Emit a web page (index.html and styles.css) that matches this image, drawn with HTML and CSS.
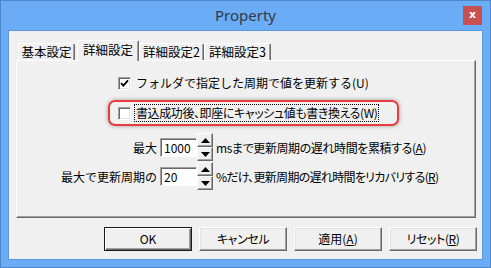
FILE: index.html
```html
<html>
<head>
    <meta charset="utf-8">
    <title>Property</title>
    <link rel="stylesheet" href="styles.css">
</head>
<body>
<div class="window">
    <div class="titlebar">
        <span class="title">Property</span>
        <span class="close">x</span>
    </div>
    <div class="client">
        <div class="tabs">
            <div class="tab tab-1">基本設定</div>
            <div class="tab tab-2 active">詳細設定</div>
            <div class="tab tab-3">詳細設定2</div>
            <div class="tab tab-4">詳細設定3</div>
        </div>
        <div class="panel">
            <div class="check first">
                <span class="box">
                    <svg width="11" height="11" viewBox="0 0 11 11"><path d="M2 5 L4.3 7.6 L9 2.4" fill="none" stroke="#000" stroke-width="1.8"/></svg>
                </span>
                <span>フォルダで指定した周期で値を更新する(U)</span>
            </div>
            <div class="highlight">
                <div class="check">
                    <span class="box"></span>
                    <span class="focus tight">書込成功後、即座にキャッシュ値も書き換える(W)</span>
                </div>
            </div>
            <div class="fields">
                <span class="label">最大</span>
                <div class="spin-field">
                    <span class="input">1000</span>
                    <span class="spinner">
                        <span class="spin-btn"><svg width="9" height="5" viewBox="0 0 9 5"><path d="M4.5 0 L9 5 L0 5 Z"/></svg></span>
                        <span class="spin-btn"><svg width="9" height="5" viewBox="0 0 9 5"><path d="M0 0 L9 0 L4.5 5 Z"/></svg></span>
                    </span>
                </div>
                <span class="tight">msまで更新周期の遅れ時間を累積する(<u>A</u>)</span>

                <span class="label">最大で更新周期の</span>
                <div class="spin-field">
                    <span class="input">20</span>
                    <span class="spinner">
                        <span class="spin-btn"><svg width="9" height="5" viewBox="0 0 9 5"><path d="M4.5 0 L9 5 L0 5 Z"/></svg></span>
                        <span class="spin-btn"><svg width="9" height="5" viewBox="0 0 9 5"><path d="M0 0 L9 0 L4.5 5 Z"/></svg></span>
                    </span>
                </div>
                <span class="tight tighter">%だけ、更新周期の遅れ時間をリカバリする(<u>R</u>)</span>
            </div>
        </div>
        <div class="buttons">
            <span class="btn default">OK</span>
            <span class="btn tight">キャンセル</span>
            <span class="btn">適用(<u>A</u>)</span>
            <span class="btn tight">リセット(<u>R</u>)</span>
        </div>
    </div>
</div>
</body>
</html>
```

FILE: styles.css
```css
*{
    margin: 0px;
    padding: 0px;
    box-sizing: border-box;
}
body{
    background-color: #ffffff;
    font-family: "Noto Sans CJK JP", "Noto Sans", sans-serif;
    font-size: 12px;
    color: #000;
    white-space: nowrap;
}
/* proportional kana, as the dialog font has */
.tight{
    font-feature-settings: "palt";
    letter-spacing: -0.4px;
}
.tighter{
    letter-spacing: -0.7px;
}
/* window frame */
.window{
    width: 491px;
    height: 268px;
    background: #6aacf6;
    border: 1px solid #4d87c7;
}
.titlebar{
    height: 29px;
    display: grid;
    grid-template-columns: 1fr auto 1fr;
}
.title{
    grid-column: 2;
    font-family: "Noto Sans", sans-serif;
    font-size: 15px;
    line-height: 29px;
    color: #333a44;
}
.close{
    grid-column: 3;
    justify-self: end;
    width: 19px;
    height: 19px;
    margin: 5px 8px 0 0;
    background: #c75050;
    color: #fff;
    font-family: "DejaVu Sans", sans-serif;
    font-weight: bold;
    font-size: 11px;
    line-height: 17px;
    text-align: center;
}
.client{
    height: 230px;
    margin: 0 7px;
    background: #f0f0f0;
    border: 1px solid #5b97db;
    padding: 9px 6px 0 7px;
}
/* tabs */
.tabs{
    display: flex;
    align-items: flex-end;
    height: 20px;
    padding-left: 2px;
}
.tab{
    height: 17px;
    border: 1px solid;
    border-bottom: none;
    border-color: #fff #696969 #fff #fff;
    border-radius: 2px 2px 0 0;
    box-shadow: inset -1px 0 #a0a0a0;
    text-align: center;
    line-height: 16px;
    font-size: 12.5px;
    background: #f0f0f0;
}
.tab-1{ width: 57px; }
.tab-2{ width: 62px; margin-left: 2px; }
.tab-3{ width: 65px; }
.tab-4{ width: 67px; }
.tab.active{
    height: 21px;
    margin-bottom: -1px;
    line-height: 18px;
    position: relative;
    z-index: 1;
}
.panel{
    height: 158px;
    border: 1px solid;
    border-color: #fff #696969 #696969 #fff;
    box-shadow: inset -1px -1px #a0a0a0;
}
/* check boxes */
.check{
    display: flex;
    align-items: center;
    height: 16px;
    line-height: 16px;
}
.check.first{
    margin: 14px 0 0 101px;
}
.box{
    width: 13px;
    height: 13px;
    margin-right: 5px;
    background: #fff;
    border: 1px solid;
    border-color: #a0a0a0 #fff #fff #a0a0a0;
    box-shadow: inset 1px 1px #696969, inset -1px -1px #e3e3e3;
    display: flex;
    align-items: center;
    justify-content: center;
}
.highlight{
    width: 291px;
    height: 26px;
    margin: 9px 0 0 91px;
    padding-left: 8px;
    border: 2px solid #e63b3f;
    border-radius: 7px;
    box-shadow: 0 0 4px rgba(0,0,0,0.35);
    display: flex;
    align-items: center;
}
.highlight .box{
    margin-right: 4px;
}
.focus{
    outline: 1px dotted #000;
    padding: 0 1px;
}
/* numeric fields */
.fields{
    margin-top: 7px;
    display: grid;
    grid-template-columns: 140px auto 1fr;
    grid-auto-rows: 28px;
    column-gap: 3px;
    row-gap: 1px;
    align-items: center;
}
.label{
    justify-self: end;
}
.spin-field{
    display: flex;
    align-items: center;
}
.input{
    width: 37px;
    height: 19px;
    background: #fff;
    border: 1px solid;
    border-color: #a0a0a0 #fff #fff #a0a0a0;
    box-shadow: inset 1px 1px #696969;
    padding-left: 3px;
    line-height: 17px;
}
.spinner{
    width: 16px;
    height: 28px;
    display: flex;
    flex-direction: column;
}
.spin-btn{
    flex: 1;
    background: #f0f0f0;
    border: 1px solid;
    border-color: #fff #696969 #696969 #fff;
    box-shadow: inset -1px -1px #a0a0a0;
    display: flex;
    align-items: center;
    justify-content: center;
}
/* bottom buttons */
.buttons{
    display: flex;
    justify-content: flex-end;
    gap: 7px;
    margin: 9px -1px 0 0;
}
.btn{
    width: 88px;
    height: 24px;
    border: 1px solid;
    border-color: #fff #696969 #696969 #fff;
    box-shadow: inset -1px -1px #a0a0a0, inset 1px 1px #e3e3e3;
    text-align: center;
    line-height: 21px;
}
.btn.default{
    border: 1px solid #1a1a1a;
    box-shadow: inset 1px 1px #fff, inset -1px -1px #696969, inset -2px -2px #a0a0a0;
}
```
